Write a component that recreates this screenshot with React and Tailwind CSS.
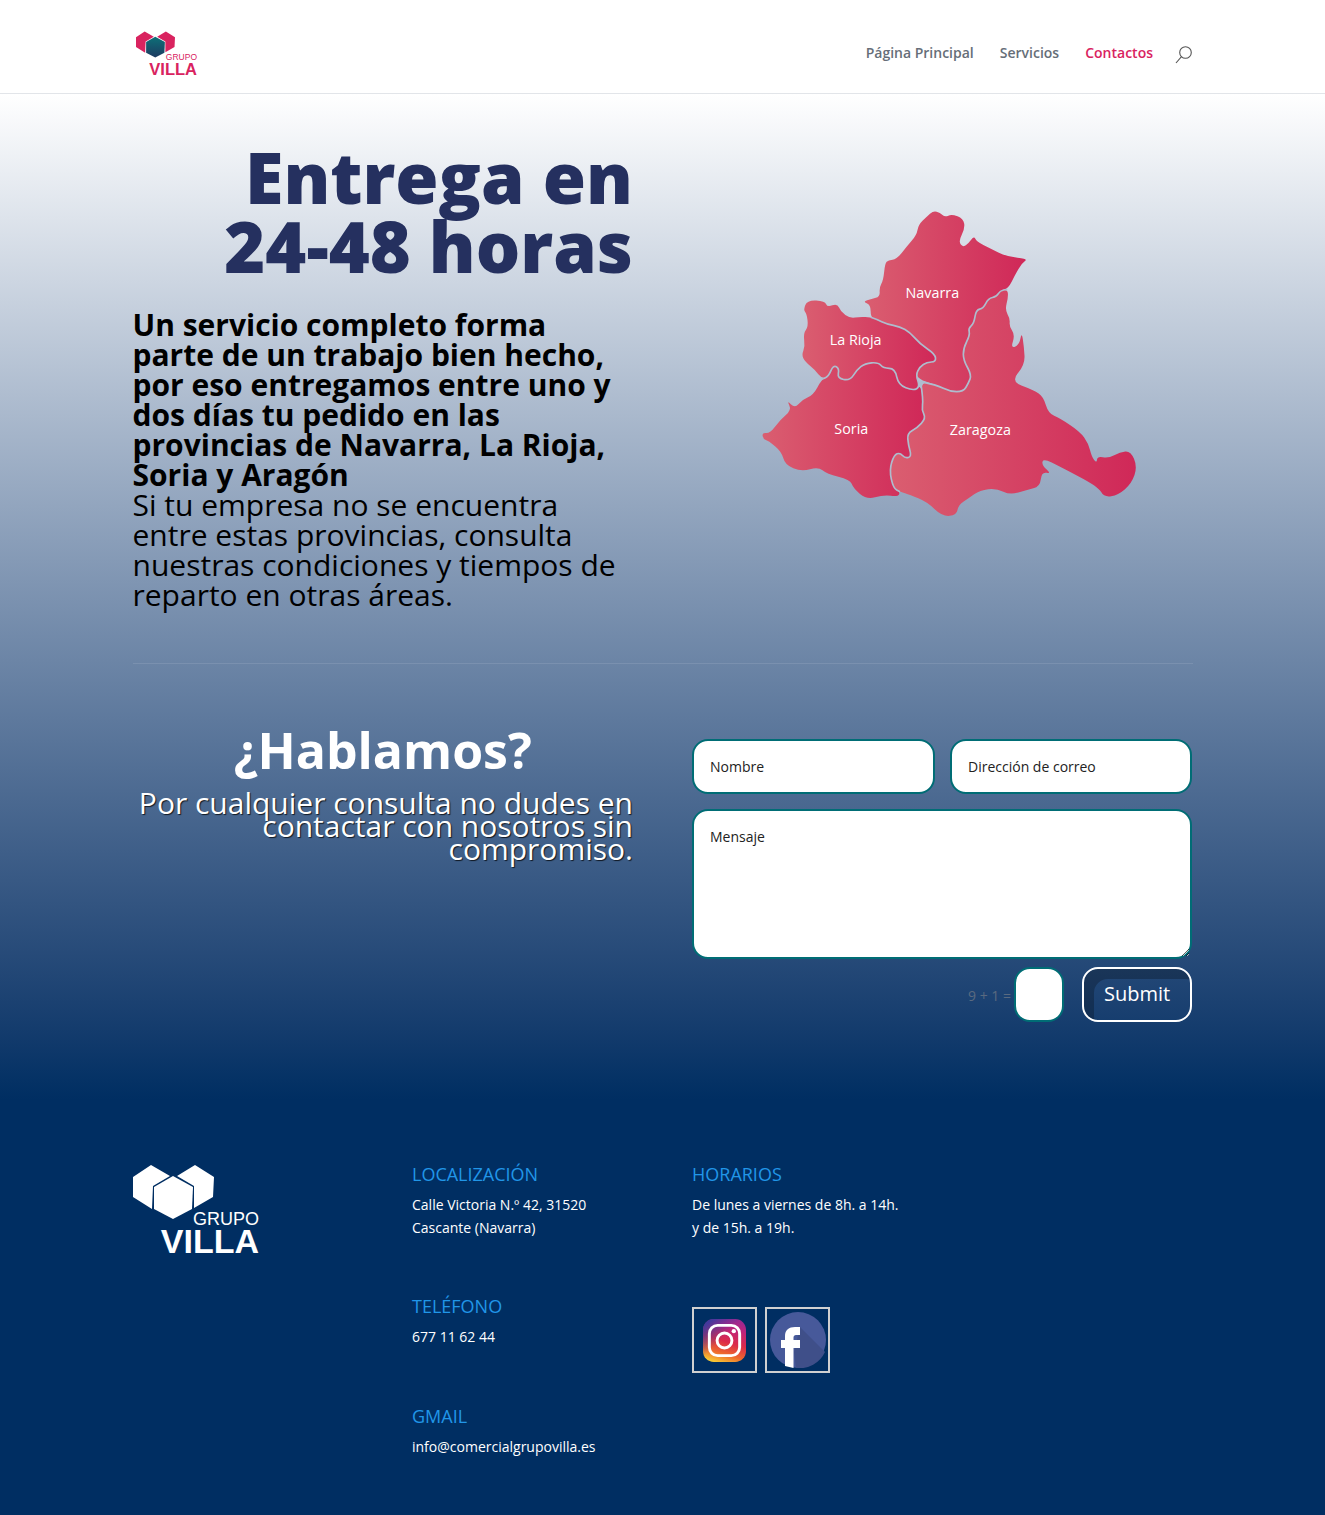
import React from 'react';

const navarra = "362,352 362,315 338,305 365,297 390,290 388,262 400,240 405,190 415,180 440,178 470,140 500,105 505,75 530,50 550,32 570,38 585,52 605,42 640,56 645,85 625,125 640,142 655,130 672,108 680,125 720,145 770,170 835,176 815,190 795,225 775,265 750,272 740,290 715,295 700,325 678,330 672,370 655,385 660,405 640,445 640,480 665,525 655,550 640,575 600,575 560,555 515,542 497,525 510,500 530,487 558,485 555,462 510,432 480,397 450,380 410,372 380,358";
const rioja = "160,330 172,300 225,303 232,322 262,310 272,335 300,355 330,350 362,352 380,358 410,372 450,380 480,397 510,432 555,462 558,485 530,487 510,500 497,525 510,560 490,572 445,555 435,505 400,505 385,487 345,490 320,510 300,542 262,535 268,505 250,495 235,530 215,535 195,510 165,485 155,465 165,440 160,400 175,380 170,340";
const soria = "215,538 235,530 250,495 268,505 262,535 300,542 320,510 345,490 385,487 400,505 435,505 445,555 490,572 512,555 520,600 515,630 528,655 500,685 472,700 475,735 485,770 465,775 450,758 432,765 418,810 430,865 450,875 445,890 400,885 350,899 310,865 300,838 230,822 205,800 155,815 105,795 95,755 55,722 40,718 36,698 60,700 90,660 125,630 110,600 135,625 155,600 190,585";
const zaragoza = "512,545 560,555 600,575 640,575 655,550 665,525 640,480 640,445 660,405 655,385 672,370 678,330 700,325 715,295 740,290 750,272 772,268 775,290 765,330 780,355 778,380 795,405 782,445 808,435 815,395 822,440 825,495 782,545 850,570 880,590 895,640 930,655 990,695 1015,730 1025,770 1040,790 1042,768 1075,775 1110,756 1142,753 1162,800 1145,850 1105,885 1062,892 1045,860 930,800 880,775 875,795 905,822 875,815 870,860 830,870 780,885 740,865 690,870 655,895 625,915 620,945 578,950 530,905 480,885 450,875 430,865 418,810 432,765 450,758 465,775 485,770 475,735 472,700 500,685 528,655 515,630 520,600";

const borders = [
  "362,352 380,358 410,372 450,380 480,397 510,432 555,462 558,485 530,487 510,500 497,525 510,560 490,572 445,555 435,505 400,505 385,487 345,490 320,510 300,542 262,535 268,505 250,495 235,530 215,538",
  "512,545 560,555 600,575 640,575 655,550 665,525 640,480 640,445 660,405 655,385 672,370 678,330 700,325 715,295 740,290 750,272 772,268",
  "512,545 520,600 515,630 528,655 500,685 472,700 475,735 485,770 465,775 450,758 432,765 418,810 430,865 450,875",
];

const parse = (s) => s.split(' ').map((p) => p.split(',').map(Number));

// rounded outline through the midpoints of the traced points
function smooth(s, closed) {
  const pts = parse(s);
  const mid = (a, b) => [(a[0] + b[0]) / 2, (a[1] + b[1]) / 2];
  if (closed) {
    let d = `M${mid(pts[pts.length - 1], pts[0]).join(',')}`;
    pts.forEach((p, i) => {
      d += ` Q${p.join(',')} ${mid(p, pts[(i + 1) % pts.length]).join(',')}`;
    });
    return d + ' Z';
  }
  let d = `M${pts[0].join(',')}`;
  for (let i = 1; i < pts.length - 1; i++) {
    d += ` Q${pts[i].join(',')} ${mid(pts[i], pts[i + 1]).join(',')}`;
  }
  return d + ` L${pts[pts.length - 1].join(',')}`;
}

function SpainMap() {
  return (
    <svg viewBox="0 0 1200 975" className="w-[400px] h-[325px]">
      <defs>
        <linearGradient id="g1" x1="0" x2="1" y1="0" y2="0">
          <stop offset="0" stopColor="#da5e70" />
          <stop offset="1" stopColor="#d02858" />
        </linearGradient>
      </defs>
      {[navarra, rioja, soria, zaragoza].map((r, i) => (
        <path key={i} d={smooth(r, true)} fill="url(#g1)" />
      ))}
      {borders.map((b, i) => (
        <path key={i} d={smooth(b, false)} fill="none" stroke="#aebdce" strokeWidth="5" strokeLinejoin="round" />
      ))}
      <g fill="#fff" fontFamily="'Open Sans', sans-serif" fontSize="43" fontWeight="500" textAnchor="middle">
        <text x="547" y="294">Navarra</text>
        <text x="317" y="435">La Rioja</text>
        <text x="304" y="701">Soria</text>
        <text x="691" y="705">Zaragoza</text>
      </g>
    </svg>
  );
}

function Cubes({ left, mid, right, className, gradient }) {
  return (
    <svg viewBox="0 0 81 54" className={className}>
      {gradient && (
        <defs>
          <linearGradient id="hex" x1="0" x2="0" y1="0" y2="1">
            <stop offset="0" stopColor="#0d7078" />
            <stop offset="1" stopColor="#1d3a60" />
          </linearGradient>
        </defs>
      )}
      <polygon points="0,12 18,0 37,11 20,21 19,44 0,32" fill={left} />
      <polygon points="44,11 62,0 81,12 80,32 61,43 61,21" fill={right} />
      <polygon points="21,22 40,11 60,22 59,44 40,54 21,44" fill={gradient ? 'url(#hex)' : mid} />
    </svg>
  );
}

function Logo({ footer }) {
  if (footer) {
    return (
      <div className="relative w-[126px] h-[94px]">
        <Cubes left="#fff" mid="#fff" right="#fff" className="absolute left-0 top-0 w-[81px] h-[54px]" />
        <span className="absolute right-0 top-[44px] text-[18px] leading-[20px] text-white font-['Liberation_Sans',sans-serif]">GRUPO</span>
        <span className="absolute right-0 top-[57px] text-[34px] leading-[38px] font-bold text-white font-['Liberation_Sans',sans-serif]">VILLA</span>
      </div>
    );
  }
  return (
    <div className="relative w-[61px] h-[47px]">
      <Cubes left="#d9235f" right="#d9235f" gradient className="absolute left-0 top-0 w-[39px] h-[27px]" />
      <span className="absolute right-0 top-[21px] text-[8.5px] leading-[11px] text-[#d9235f] font-['Liberation_Sans',sans-serif]">GRUPO</span>
      <span className="absolute right-0 top-[29px] text-[16.5px] leading-[18px] font-bold text-[#d9235f] font-['Liberation_Sans',sans-serif]">VILLA</span>
    </div>
  );
}

function Instagram() {
  return (
    <svg viewBox="0 0 44 44" className="w-[43px] h-[43px]">
      <defs>
        <linearGradient id="ig" x1="0.3" x2="0.6" y1="1" y2="0">
          <stop offset="0" stopColor="#f7c833" />
          <stop offset="0.22" stopColor="#ee6a2d" />
          <stop offset="0.5" stopColor="#dc2a4a" />
          <stop offset="0.8" stopColor="#c0247a" />
          <stop offset="1" stopColor="#a0288f" />
        </linearGradient>
        <linearGradient id="igb" x1="0" x2="0.45" y1="0" y2="0.45">
          <stop offset="0" stopColor="#1f3fa8" />
          <stop offset="1" stopColor="#1f3fa8" stopOpacity="0" />
        </linearGradient>
      </defs>
      <rect width="44" height="44" rx="11" fill="url(#ig)" />
      <rect width="44" height="44" rx="11" fill="url(#igb)" />
      <rect x="6.500" y="6.500" width="31" height="31" rx="8.500" fill="none" stroke="#fff" strokeWidth="3" />
      <circle cx="22" cy="22" r="7.600" fill="none" stroke="#fff" strokeWidth="3" />
      <circle cx="31.500" cy="12.500" r="2.200" fill="#fff" />
    </svg>
  );
}

function Facebook() {
  return (
    <svg viewBox="0 0 56 56" className="w-[56px] h-[56px]">
      <circle cx="28" cy="28" r="28" fill="#47599a" />
      <path d="M30 15 L55 40 A28 28 0 0 1 26 56 L24 40 Z" fill="#3f4f89" />
      <path d="M15 54 L15 36 L11 36 L11 28 L15 28 L15 24 C15 18 19 15 25 15 L30 15 L30 23 L26 23 C24.500 23 23.500 24 23.500 25.500 L23.500 28 L30 28 L30 36 L23.500 36 L23.500 56 Z" fill="#fff" />
    </svg>
  );
}

const inputCls = "bg-white border-2 border-[#006d75] rounded-[16px] px-4 text-[14px] text-[#222] placeholder:text-[#222] outline-none";

export default function App() {
  return (
    <div className="font-['Open_Sans',sans-serif] w-full bg-[#002e62]">
      <header className="h-[94px] bg-white border-b border-[#e2e5e9] pl-[136px] pr-[133px] flex justify-between">
        <div className="pt-[31px]"><Logo /></div>
        <nav className="flex items-start pt-[43px] text-[14px] leading-[20px] font-semibold text-[#666e78]">
          <a className="mr-[26px]">Página Principal</a>
          <a className="mr-[26px]">Servicios</a>
          <a className="text-[#d9235f] mr-[22px]">Contactos</a>
          <svg viewBox="0 0 17 18" className="w-[17px] h-[18px] mt-[3px]" fill="none" stroke="#555" strokeWidth="1.1">
            <circle cx="10.500" cy="6.500" r="5.800" />
            <path d="M6.500 10.700 L1 17" />
          </svg>
        </nav>
      </header>

      <main className="h-[1006px] bg-gradient-to-b from-white to-[#002e62] px-[132.5px]">
        <section className="h-[570px] flex border-b border-white/10">
          <div className="w-[500.5px] pt-[49px]">
            <h1 className="text-[70px] leading-[69px] font-extrabold text-[#25305f] text-right">Entrega en<br />24-48 horas</h1>
            <p className="mt-[29px] text-[30px] leading-[30px] text-black">
              <strong className="font-bold">Un servicio completo forma parte de un trabajo bien hecho, por eso entregamos entre uno y dos días tu pedido en las provincias de Navarra, La Rioja, Soria y Aragón</strong><br />
              Si tu empresa no se encuentra entre estas provincias, consulta nuestras condiciones y tiempos de reparto en otras áreas.
            </p>
          </div>
          <div className="ml-[116.5px] pt-[106px]"><SpainMap /></div>
        </section>

        <section className="flex pt-[56px]">
          <div className="w-[500.5px]">
            <h2 className="text-[50px] leading-[60px] font-bold text-white text-center">¿Hablamos?</h2>
            <p className="mt-[11px] text-[30px] leading-[23px] text-white text-right [text-shadow:1px_1px_1px_rgba(0,0,0,0.75)]">Por cualquier consulta no dudes en contactar con nosotros sin compromiso.</p>
          </div>
          <form className="ml-[59px] w-[500px] pt-[19px]">
            <div className="flex gap-[15px]">
              <input className={`${inputCls} w-[243px] h-[55px]`} placeholder="Nombre" />
              <input className={`${inputCls} w-[242px] h-[55px]`} placeholder="Dirección de correo" />
            </div>
            <textarea className={`${inputCls} w-full h-[150px] mt-[15px] pt-[15px] pb-[16px] block`} placeholder="Mensaje" />
            <div className="flex justify-end items-center mt-[8px]">
              <span className="text-[14px] leading-[20px] text-[#5a6a80] mr-[3px] pt-[3px]">9 + 1 =</span>
              <input className="bg-white border-2 border-[#006d75] rounded-[16px] w-[50px] h-[55px] mr-[18px]" />
              <button type="button" className="w-[110px] h-[55px] border-2 border-white rounded-[16px] text-white text-[20px] text-left pl-[20px] pb-[2px] shadow-[inset_10px_10px_0_rgba(0,0,0,0.25)]">Submit</button>
            </div>
          </form>
        </section>
      </main>

      <footer className="h-[415px] px-[133px] pt-[63px] flex text-white text-[14px] leading-[23px]">
        <div className="w-[279px] pt-[2px]"><Logo footer /></div>
        <div className="w-[280px]">
          <h4 className="text-[18px] leading-[23px] text-[#2196e8]">LOCALIZACIÓN</h4>
          <p className="mt-[7px]">Calle Victoria N.º 42, 31520<br />Cascante (Navarra)</p>
          <h4 className="mt-[56px] text-[18px] leading-[23px] text-[#2196e8]">TELÉFONO</h4>
          <p className="mt-[7px]">677 11 62 44</p>
          <h4 className="mt-[57px] text-[18px] leading-[23px] text-[#2196e8]">GMAIL</h4>
          <p className="mt-[7px]">info@comercialgrupovilla.es</p>
        </div>
        <div>
          <h4 className="text-[18px] leading-[23px] text-[#2196e8]">HORARIOS</h4>
          <p className="mt-[7px]">De lunes a viernes de 8h. a 14h.<br />y de 15h. a 19h.</p>
          <div className="flex gap-[8px] mt-[68px]">
            <div className="w-[65px] h-[66px] border-2 border-[#d0d0d0] flex items-center justify-center"><Instagram /></div>
            <div className="w-[65px] h-[66px] border-2 border-[#d0d0d0] flex items-center justify-center"><Facebook /></div>
          </div>
        </div>
      </footer>
    </div>
  );
}
